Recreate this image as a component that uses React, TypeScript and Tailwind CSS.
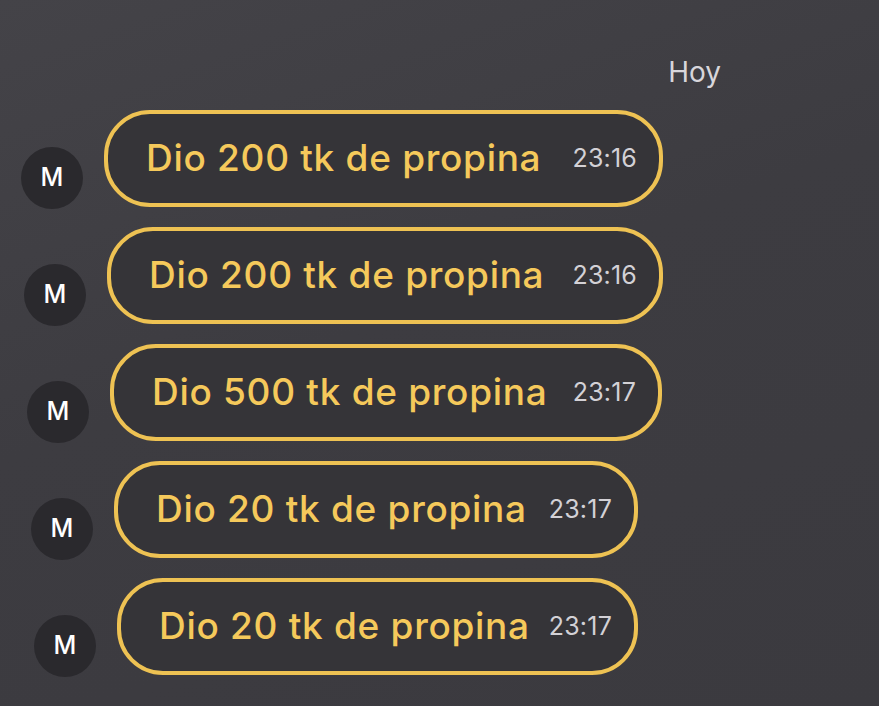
import React from "react";

type Tip = { amount: number; time: string; shift: string; width: string };

const tips: Tip[] = [
  { amount: 200, time: "23:16", shift: "pl-[21px]", width: "w-[559px]" },
  { amount: 200, time: "23:16", shift: "pl-[24px]", width: "w-[556px]" },
  { amount: 500, time: "23:17", shift: "pl-[27px]", width: "w-[552px]" },
  { amount: 20, time: "23:17", shift: "pl-[31px]", width: "w-[524px]" },
  { amount: 20, time: "23:17", shift: "pl-[34px]", width: "w-[521px]" },
];

function Row({ tip }: { tip: Tip }) {
  return (
    <div className={`flex items-end ${tip.shift}`}>
      <div className="w-[62px] h-[62px] shrink-0 rounded-full bg-[#2a292d] flex items-center justify-center text-white text-[25px] font-medium -mb-[2px]">
        M
      </div>
      <div
        className={`${tip.width} h-[97px] ml-[21px] rounded-[46px] border-[4px] border-[#eec253] bg-[#353438] flex items-center pl-[38px] pr-[22px]`}
      >
        <span className="text-[#f5c95b] text-[37px] font-medium tracking-[0.7px] whitespace-nowrap -mt-[2px]">
          Dio {tip.amount} tk de propina
        </span>
        <span className="ml-auto text-[#d3d1d6] text-[25px] tracking-[0.2px]">{tip.time}</span>
      </div>
    </div>
  );
}

export default function App() {
  return (
    <div className="w-[879px] h-[706px] overflow-hidden bg-[linear-gradient(160deg,#444348_0%,#3d3c41_45%,#3b3a3f_100%)] font-['Inter','Noto_Sans',sans-serif]">
      <div className="flex justify-end pr-[158px] pt-[54px] h-[110px]">
        <span className="text-[#d8d6db] text-[28px] leading-[36px]">Hoy</span>
      </div>
      <div className="flex flex-col gap-[20px]">
        {tips.map((t, i) => (
          <Row key={i} tip={t} />
        ))}
      </div>
    </div>
  );
}
